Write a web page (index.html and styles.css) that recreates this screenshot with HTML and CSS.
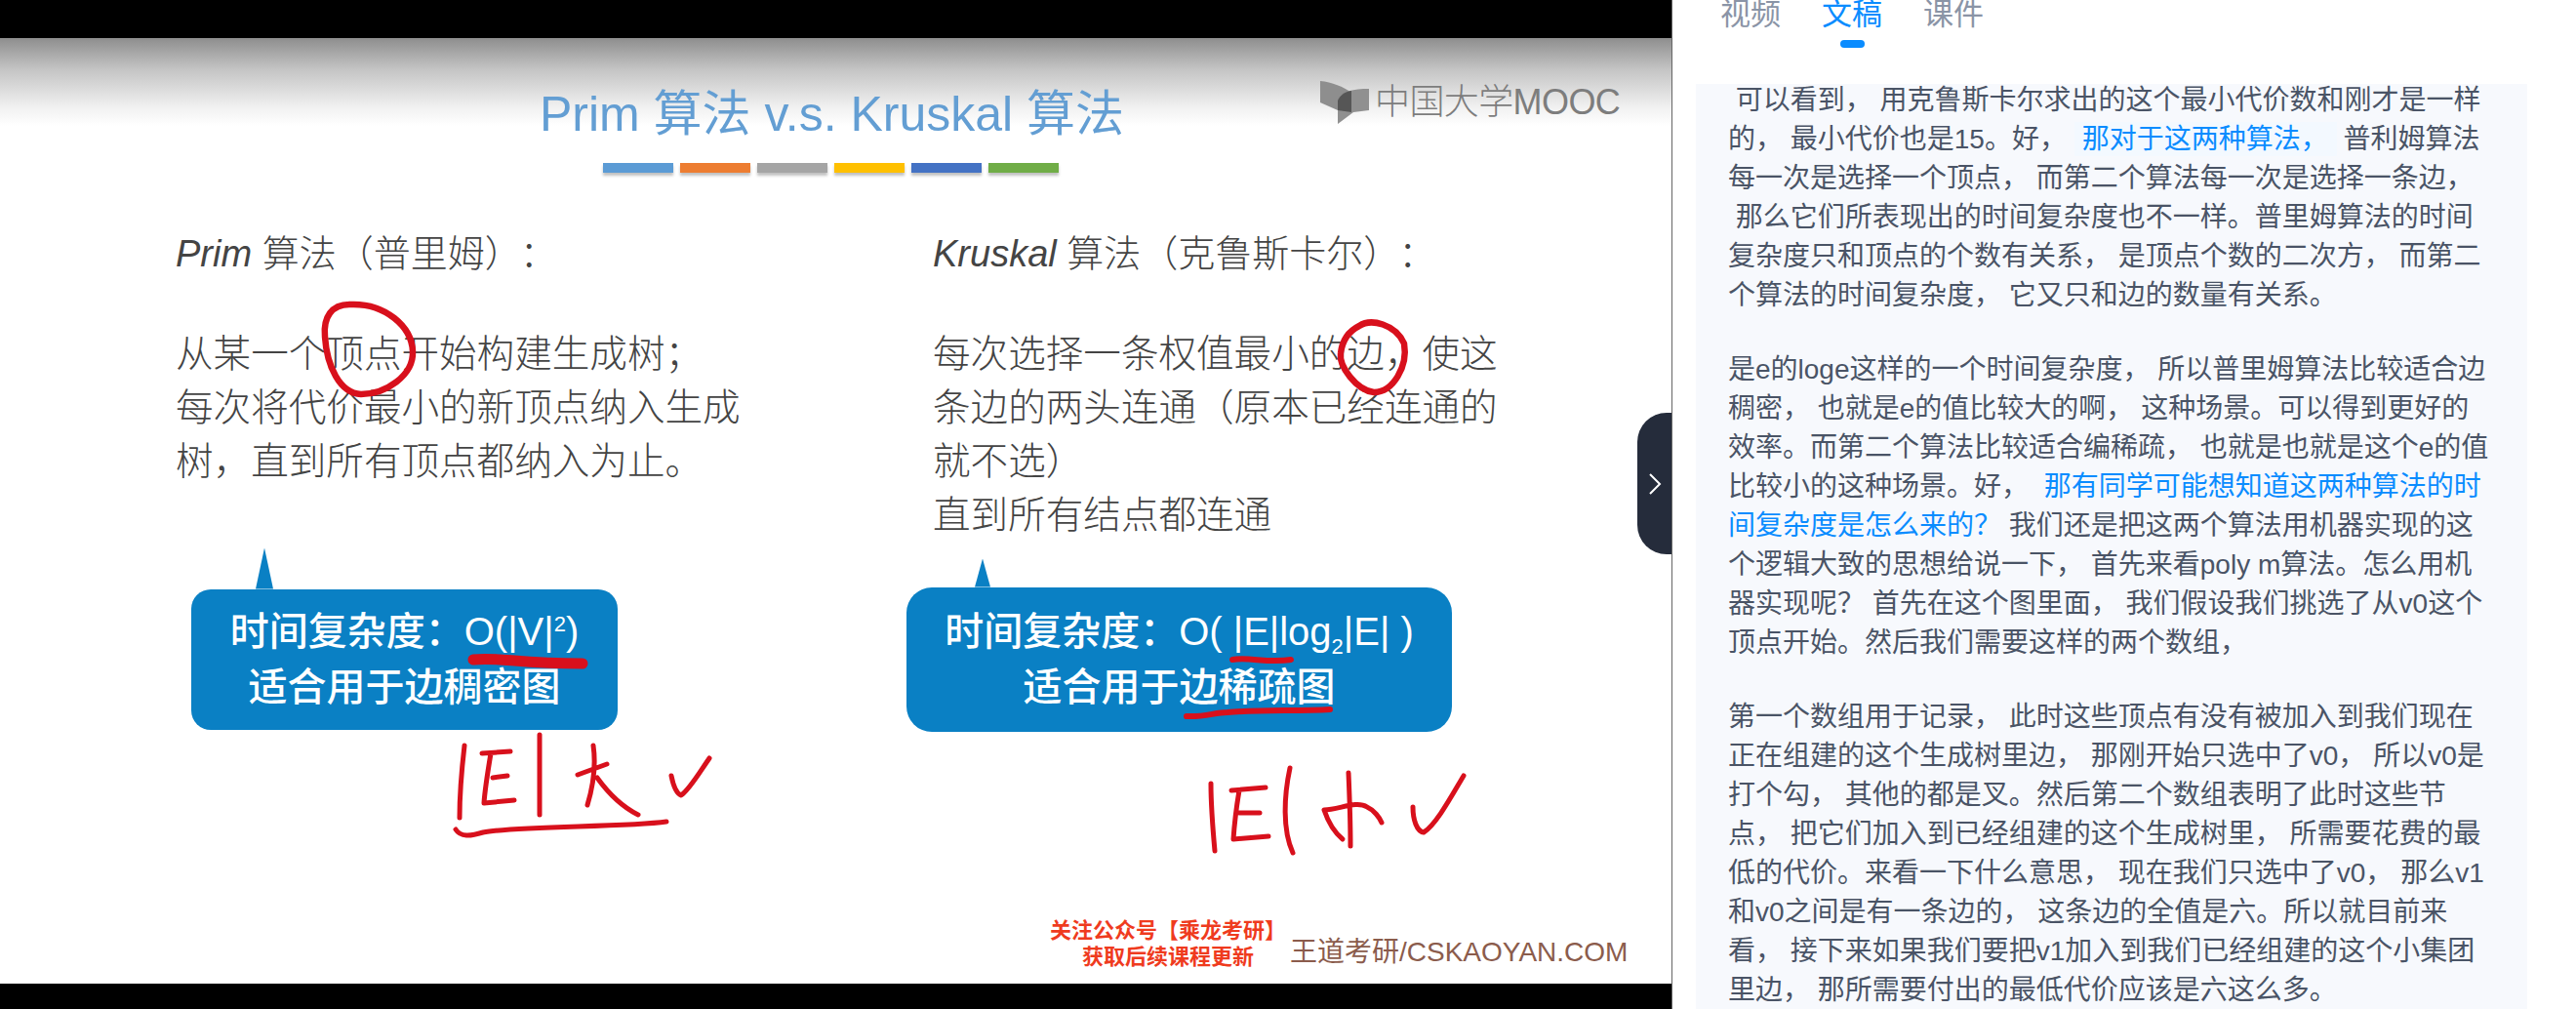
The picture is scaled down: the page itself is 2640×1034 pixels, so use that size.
FILE: index.html
```html
<!DOCTYPE html>
<html lang="zh">
<head>
  <meta charset="UTF-8">
  <title>Prim 算法 v.s. Kruskal 算法</title>
  <link rel="stylesheet" href="styles.css">
</head>
<body>
  <div class="page">
    <div class="player">
      <div class="letterbox-top"></div>
      <div class="slide">
        <h1 class="slide-title">Prim 算法 v.s. Kruskal 算法</h1>
        <div class="color-bars">
          <span class="bar bar-blue"></span>
          <span class="bar bar-orange"></span>
          <span class="bar bar-gray"></span>
          <span class="bar bar-yellow"></span>
          <span class="bar bar-navy"></span>
          <span class="bar bar-green"></span>
        </div>
        <div class="columns">
          <div class="col col-left">
            <h2 class="algo-name"><em>Prim</em> 算法（普里姆）<span class="colon">：</span></h2>
            <p class="algo-desc">从某一个顶点开始构建生成树；<br>每次将代价最小的新顶点纳入生成<br>树，直到所有顶点都纳入为止。</p>
            <div class="bubble bubble-left">
              <div>时间复杂度：O(|V|<sup>2</sup>)</div>
              <div>适合用于边稠密图</div>
            </div>
          </div>
          <div class="col col-right">
            <h2 class="algo-name"><em>Kruskal</em> 算法（克鲁斯卡尔）<span class="colon">：</span></h2>
            <p class="algo-desc">每次选择一条权值最小的边，使这<br>条边的两头连通（原本已经连通的<br>就不选）<br>直到所有结点都连通</p>
            <div class="bubble bubble-right">
              <div>时间复杂度：O( |E|log<sub>2</sub>|E| )</div>
              <div>适合用于边稀疏图</div>
            </div>
          </div>
        </div>

        <div class="mooc-logo">
          <svg class="mooc-icon" viewBox="0 0 50 44" width="50" height="44">
            <path d="M0 0 C12 1 24 6 32 12 L32 32 L18 30 L0 22 Z" fill="#8e8e8e"/>
            <path d="M18 44 L18 20 C22 10 34 8 50 8 L50 30 L34 32 Z" fill="#909090"/>
            <path d="M18 30 L18 20 C20 15 25 11 32 10 L32 32 Z" fill="#565656"/>
          </svg>
          <span class="mooc-text">中国大学MOOC</span>
        </div>

        <div class="promo">关注公众号【乘龙考研】<br><span class="promo-sub">获取后续课程更新</span></div>
        <div class="site-mark">王道考研/CSKAOYAN.COM</div>
      </div>
      <div class="letterbox-bottom"></div>

      <!-- pen marks, coordinates are the page's own -->
      <svg class="ink" viewBox="0 0 1713 1034" width="1713" height="1034">
        <g class="pen">
          <path class="pen-ring" d="M358 312 C340 312 331 325 333 345 C335 375 348 403 370 404 C395 404 424 385 423 360 C422 335 395 310 358 312"/>
          <path class="pen-ring" d="M1393 334 C1405 326 1430 332 1439 352 C1443 375 1428 402 1408 402 C1390 400 1372 375 1374 362 C1376 345 1385 338 1393 334"/>
          <path d="M476 764 C473 790 471 815 471 838"/>
          <path d="M494 772 L523 770 M503 772 C500 790 497 808 496 823 L527 820 M505 797 L520 795"/>
          <path d="M553 753 L553 835"/>
          <path d="M592 794 L622 783 M608 764 C611 785 608 805 602 825 M612 797 C625 815 640 828 654 835"/>
          <path d="M688 795 C690 805 693 813 698 815 C706 810 716 793 727 777"/>
          <path d="M467 850 C472 858 482 857 495 853 C530 846 640 848 683 842"/>
          <path d="M1241 803 C1241 825 1243 850 1245 872"/>
          <path d="M1262 810 L1297 807 M1270 810 C1267 828 1265 845 1264 860 L1300 857 M1270 833 L1291 833"/>
          <path d="M1322 787 C1316 815 1314 850 1325 874"/>
          <path d="M1382 792 C1383 815 1384 845 1384 867 M1357 830 C1362 845 1370 855 1376 860 M1357 830 C1372 830 1390 820 1401 827 C1408 830 1414 838 1416 843"/>
          <path d="M1448 827 C1448 840 1452 852 1459 853 C1472 845 1488 815 1500 795"/>
          <path class="pen-thin" d="M1263 676 C1280 673 1300 680 1323 676"/>
          <path class="pen-thin" d="M1216 734 C1235 735 1245 730 1258 730 C1290 727 1330 729 1363 727"/>
          <path class="pen-thick" d="M485 676 C510 673 530 680 597 680"/>
        </g>
      </svg>

      <button class="collapse-btn">
        <svg viewBox="0 0 14 24" width="14" height="24"><path d="M2 2 L12 12 L2 22" fill="none" stroke="#fff" stroke-width="2"/></svg>
      </button>
    </div>

    <aside class="sidebar">
      <div class="tabs">
        <div class="tab">视频</div>
        <div class="tab tab-active">文稿</div>
        <div class="tab">课件</div>
      </div>
      <div class="transcript">
        <p> 可以看到， 用克鲁斯卡尔求出的这个最小代价数和刚才是一样<br>的， 最小代价也是15。好， <span class="hl hl-current">那对于这两种算法，</span> 普利姆算法<br>每一次是选择一个顶点， 而第二个算法每一次是选择一条边，<br> 那么它们所表现出的时间复杂度也不一样。普里姆算法的时间<br>复杂度只和顶点的个数有关系， 是顶点个数的二次方， 而第二<br>个算法的时间复杂度， 它又只和边的数量有关系。</p>
        <p>是e的loge这样的一个时间复杂度， 所以普里姆算法比较适合边<br>稠密， 也就是e的值比较大的啊， 这种场景。可以得到更好的<br>效率。而第二个算法比较适合编稀疏， 也就是也就是这个e的值<br>比较小的这种场景。好， <span class="hl">那有同学可能想知道这两种算法的时<br>间复杂度是怎么来的？</span> 我们还是把这两个算法用机器实现的这<br>个逻辑大致的思想给说一下， 首先来看poly m算法。怎么用机<br>器实现呢？ 首先在这个图里面， 我们假设我们挑选了从v0这个<br>顶点开始。然后我们需要这样的两个数组，</p>
        <p>第一个数组用于记录， 此时这些顶点有没有被加入到我们现在<br>正在组建的这个生成树里边， 那刚开始只选中了v0， 所以v0是<br>打个勾， 其他的都是叉。然后第二个数组表明了此时这些节<br>点， 把它们加入到已经组建的这个生成树里， 所需要花费的最<br>低的代价。来看一下什么意思， 现在我们只选中了v0， 那么v1<br>和v0之间是有一条边的， 这条边的全值是六。所以就目前来<br>看， 接下来如果我们要把v1加入到我们已经组建的这个小集团<br>里边， 那所需要付出的最低代价应该是六这么多。</p>
      </div>
    </aside>
  </div>
</body>
</html>
```

FILE: styles.css
```css
html, body {
  margin: 0;
  height: 100%;
  background: #fff;
}
body {
  font-family: "Liberation Sans", "Noto Sans CJK SC", sans-serif;
}
.page {
  display: flex;
  height: 1034px;
  overflow: hidden;
}

/* video side */
.player {
  position: relative;
  display: flex;
  flex-direction: column;
  width: 1714px;
  flex: none;
  border-right: 1px solid #666;
  box-sizing: border-box;
}
.letterbox-top {
  height: 39px;
  background: #000;
}
.letterbox-bottom {
  height: 26px;
  background: #000;
}
.slide {
  position: relative;
  flex: 1;
  padding: 48px 0 0 180px;
  background: linear-gradient(#8e8e8e 0, #c4c4c4 32px, #f2f2f2 72px, #fff 90px);
  color: #444;
}
.slide-title {
  width: 1345px;
  margin: 0;
  font-size: 50px;
  line-height: 60px;
  font-weight: 400;
  color: #639ed3;
  text-align: center;
}
.color-bars {
  display: flex;
  gap: 7.5px;
  margin: 20px 0 0 438px;
}
.bar {
  width: 71.5px;
  height: 10px;
  box-shadow: 0 3px 3px rgba(0, 0, 0, 0.25);
}
.bar-blue { background: #5b9bd5; }
.bar-orange { background: #ed7d31; }
.bar-gray { background: #a5a5a5; }
.bar-yellow { background: #ffc000; }
.bar-navy { background: #4472c4; }
.bar-green { background: #70ad47; }

.columns {
  display: grid;
  grid-template-columns: 776px 1fr;
  margin-top: 56px;
}
.algo-name {
  margin: 0;
  font-size: 38px;
  line-height: 55px;
  font-weight: 300;
}
.colon {
  margin-left: 17px;
}
.algo-desc {
  margin: 47px 0 0;
  font-size: 38.6px;
  line-height: 55px;
  font-weight: 300;
}
.bubble {
  position: relative;
  display: flex;
  flex-direction: column;
  justify-content: center;
  background: #0a80c4;
  color: #fff;
  font-size: 40px;
  line-height: 57px;
  font-weight: 500;
  text-align: center;
}
.bubble::before {
  content: "";
  position: absolute;
  bottom: 100%;
  background: #0a80c4;
  clip-path: polygon(50% 0, 100% 100%, 0 100%);
}
.bubble sup, .bubble sub {
  font-size: 22px;
  line-height: 0;
}
.bubble-left {
  width: 437px;
  height: 144px;
  margin: 103.5px 0 0 16px;
  border-radius: 20px;
}
.bubble-left::before {
  left: 66px;
  width: 18px;
  height: 42px;
}
.bubble-right {
  width: 559px;
  height: 148px;
  margin: 46.5px 0 0 -27px;
  border-radius: 26px;
}
.bubble-right::before {
  left: 70px;
  width: 16px;
  height: 29px;
}

.mooc-logo {
  position: absolute;
  top: 44px;
  left: 1353px;
  display: flex;
  align-items: center;
  gap: 6px;
  color: #7d7d7d;
}
.mooc-text {
  font-size: 36px;
  line-height: 44px;
  font-weight: 300;
  letter-spacing: -0.6px;
}
.promo {
  position: absolute;
  top: 901px;
  left: 1076px;
  color: #ef3b1e;
  font-size: 22px;
  line-height: 27px;
  font-weight: 700;
  white-space: nowrap;
}
.promo-sub {
  margin-left: 33px;
}
.site-mark {
  position: absolute;
  top: 918px;
  left: 1322px;
  color: #8b5c4c;
  font-size: 28px;
  line-height: 38px;
  white-space: nowrap;
}

.ink {
  position: absolute;
  top: 0;
  left: 0;
  pointer-events: none;
}
.pen {
  fill: none;
  stroke: #d8101c;
  stroke-width: 5;
  stroke-linecap: round;
  stroke-linejoin: round;
}
.pen-ring { stroke-width: 6.5; }
.pen-thin { stroke-width: 6; }
.pen-thick { stroke-width: 11; }

.collapse-btn {
  position: absolute;
  top: 423px;
  right: 0;
  display: flex;
  align-items: center;
  justify-content: center;
  width: 35px;
  height: 145px;
  padding: 0;
  border: 0;
  border-radius: 30px 0 0 30px;
  background: #252c3b;
}

/* right side */
.sidebar {
  flex: 1;
  display: flex;
  flex-direction: column;
  min-width: 0;
}
.tabs {
  display: flex;
  gap: 42px;
  height: 86px;
  padding-left: 49px;
  box-sizing: border-box;
}
.tab {
  margin-top: -2px;
  font-size: 31px;
  line-height: 34px;
  color: #8a94a6;
}
.tab-active {
  position: relative;
  color: #0a8cff;
}
.tab-active::after {
  content: "";
  position: absolute;
  top: 43px;
  left: 19px;
  width: 25px;
  height: 8px;
  border-radius: 4px;
  background: #0a8cff;
}
.transcript {
  flex: 1;
  width: 852px;
  margin-left: 24px;
  padding-left: 33px;
  box-sizing: border-box;
  overflow: hidden;
  background: #f7f9fd;
  color: #4a5466;
  font-size: 28px;
  line-height: 40px;
}
.transcript p {
  margin: 0 0 36px;
  white-space: pre;
}
.transcript p:first-child {
  margin-top: -3px;
}
.hl {
  padding-left: 8px;
  color: #0a8cff;
}
.hl-current {
  padding: 2px 9px 2px 8px;
  margin-right: -1px;
  background: #f3f9ff;
}
```
